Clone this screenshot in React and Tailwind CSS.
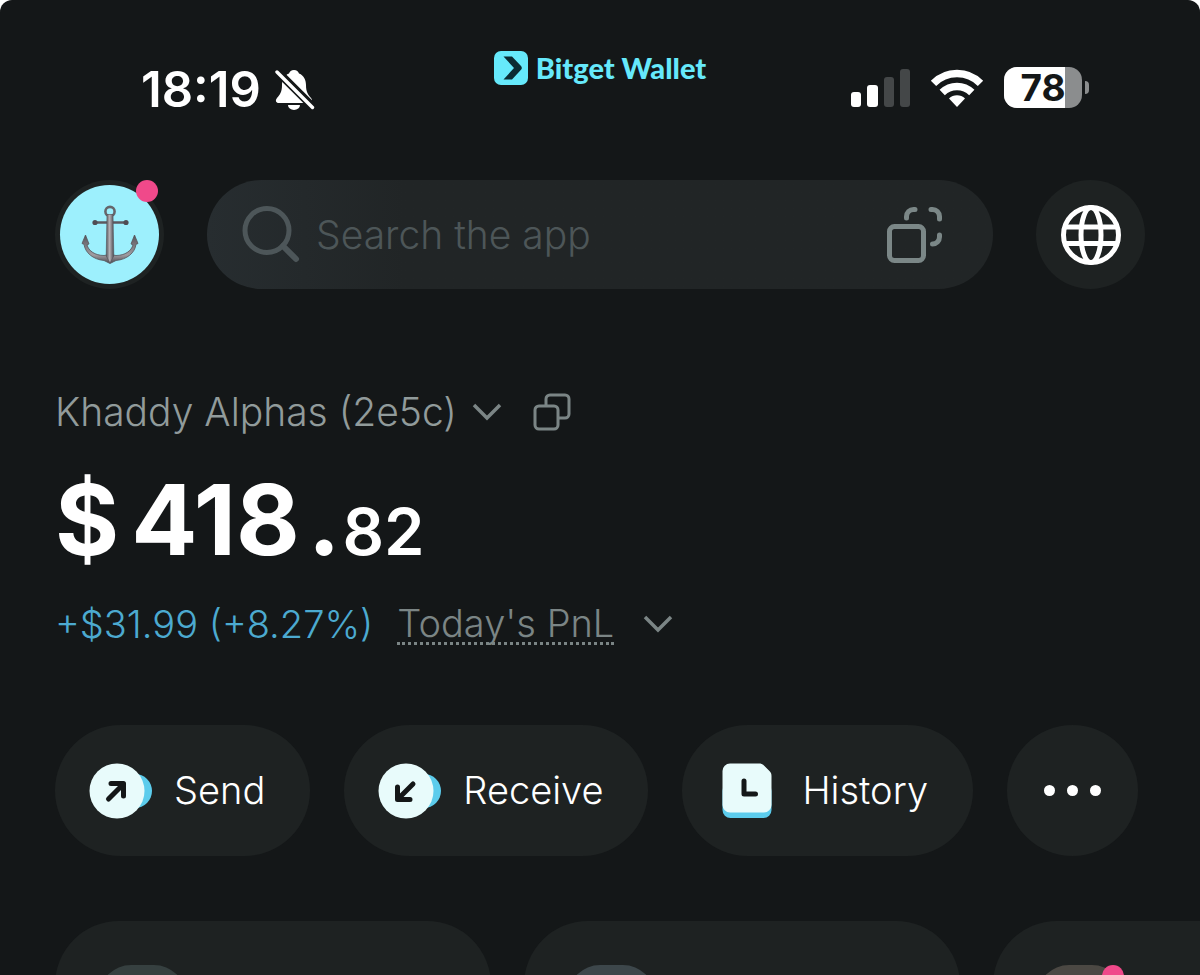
function BellOff() {
  return (
    <svg viewBox="0 0 40 42" className="h-[42px] w-10" aria-hidden="true">
      <path
        d="M19 1c-2.600 0-4.500 1.600-5 3.500C9 6.500 7 11 7 16c0 7-2 9.500-5 13-2 2.500-1.200 5 2 5h30c3.200 0 4-2.500 2-5-3-3.500-5-6-5-13 0-5-2-9.500-7-11.500C23.500 2.600 21.600 1 19 1z"
        fill="#fff"
      />
      <path d="M13 36h12a6 5 0 0 1-12 0z" fill="#fff" />
      <path d="M0 0L40 40" stroke="#141718" strokeWidth="8" />
      <path d="M2 3L37.500 38.500" stroke="#fff" strokeWidth="3.400" strokeLinecap="round" />
    </svg>
  )
}

function BrandMark() {
  return (
    <svg viewBox="0 0 34 34" className="h-[34px] w-[34px]" aria-hidden="true">
      <rect width="34" height="34" rx="7" fill="#66e9fb" />
      <path d="M9.500 5.500h8.500l9 9.500c1.100 1.200 1.100 2.600 0 3.800L18 28.500H9.500L20 17z" fill="#0b2b33" />
    </svg>
  )
}

function Signal() {
  return (
    <svg viewBox="0 0 60 38" className="h-[38px] w-[60px]" aria-hidden="true">
      <rect x="1" y="23" width="10" height="15" rx="3" fill="#fff" />
      <rect x="17" y="16" width="11" height="22" rx="3" fill="#fff" />
      <rect x="34" y="8" width="10" height="30" rx="3" fill="#444748" />
      <rect x="50" y="0" width="10" height="38" rx="3" fill="#444748" />
    </svg>
  )
}

function Wifi() {
  return (
    <svg viewBox="0 0 54 40" className="h-10 w-[54px]" aria-hidden="true">
      <g fill="none" stroke="#fff" strokeWidth="7.500">
        <path d="M3.500 15.300a33 33 0 0 1 47 0" />
        <path d="M12.200 24.500a21 21 0 0 1 29.600 0" />
      </g>
      <path d="M27 39l-8-8.500a11.500 11.500 0 0 1 16 0z" fill="#fff" />
    </svg>
  )
}

function Battery({ level }) {
  return (
    <div className="flex items-center gap-[3px]">
      <div className="relative flex h-[41px] w-[78px] items-center justify-center rounded-[13px] bg-[#8b8d8e]">
        <div className="absolute inset-y-0 left-0 rounded-l-[13px] bg-white" style={{ width: `${level}%` }} />
        <span className="relative text-[37px] leading-[41px] font-bold text-[#141718]">{level}</span>
      </div>
      <div className="h-[13px] w-1 rounded-r-full bg-[#8b8d8e]" />
    </div>
  )
}

function Anchor() {
  return (
    <svg viewBox="0 0 58 60" className="h-[60px] w-[58px]" aria-hidden="true">
      <defs>
        <linearGradient id="steel" x1="0" x2="1" y1="0" y2="0">
          <stop offset="0" stopColor="#55555b" />
          <stop offset="0.450" stopColor="#b5b2b6" />
          <stop offset="1" stopColor="#4b494f" />
        </linearGradient>
        <linearGradient id="arms" x1="0" x2="0" y1="0" y2="1">
          <stop offset="0" stopColor="#55535a" />
          <stop offset="0.700" stopColor="#a09da2" />
          <stop offset="1" stopColor="#4b494f" />
        </linearGradient>
      </defs>
      <circle cx="29" cy="6.500" r="4.600" fill="none" stroke="#66666b" strokeWidth="2.600" />
      <path d="M14 17.500h31" stroke="#5c5a60" strokeWidth="2.600" />
      <circle cx="14" cy="17.500" r="2.600" fill="#4f4d54" />
      <circle cx="45" cy="17.500" r="2.600" fill="#4f4d54" />
      <path
        d="M1 38.500L4.500 30l3.500 9-2 .8c1.500 6 8 10.700 17 10.700l6-1 6 1c9 0 15.500-4.700 17-10.700l-2-.8 3.500-9 3.500 8.500-2 .8c-1 8.500-9 15.200-20 16.200L29 58.500l-6-3C12 54.500 4 47.500 3 39.300z"
        fill="url(#arms)"
        stroke="#56545a"
        strokeWidth="0.800"
      />
      <path d="M26 9.500h6l.8 41.500-3.800 7-3.800-7z" fill="url(#steel)" stroke="#56545a" strokeWidth="0.600" />
    </svg>
  )
}

function SearchIcon() {
  return (
    <svg viewBox="0 0 58 58" className="h-[58px] w-[58px] shrink-0" aria-hidden="true">
      <g fill="none" stroke="#4d5659" strokeWidth="5" strokeLinecap="round">
        <circle cx="25" cy="24.500" r="22" />
        <path d="M41 40l13 13" strokeWidth="6" />
      </g>
    </svg>
  )
}

function ScanIcon() {
  return (
    <svg viewBox="0 0 56 56" className="h-14 w-14" aria-hidden="true">
      <g fill="none" stroke="#7b8787" strokeWidth="5" strokeLinecap="round">
        <rect x="2.500" y="19.500" width="34" height="34" rx="5" />
        <path d="M19.500 11v-1.500a7 7 0 0 1 7-7H28" />
        <path d="M44 2.500h1.500a7 7 0 0 1 7 7V12" />
        <path d="M52.500 28v2a7 7 0 0 1-7 7" />
      </g>
    </svg>
  )
}

function Globe() {
  return (
    <svg viewBox="0 0 60 60" className="h-[60px] w-[60px]" aria-hidden="true">
      <g fill="none" stroke="#fff" strokeWidth="5">
        <circle cx="30" cy="30" r="27.500" />
        <ellipse cx="30" cy="30" rx="10" ry="27.500" />
        <path d="M4 22h52M4 38.500h52" />
      </g>
    </svg>
  )
}

function Chevron() {
  return (
    <svg viewBox="0 0 32 20" className="h-5 w-8" aria-hidden="true">
      <path d="M3 3l13 13L29 3" fill="none" stroke="#7b8585" strokeWidth="3.500" />
    </svg>
  )
}

function CopyIcon() {
  return (
    <svg viewBox="0 0 38 38" className="h-[38px] w-[38px]" aria-hidden="true">
      <g fill="none" stroke="#7b8585" strokeWidth="3">
        <rect x="2" y="13" width="23" height="23" rx="4" />
        <path d="M13 13V6a4 4 0 0 1 4-4h15a4 4 0 0 1 4 4v15a4 4 0 0 1-4 4h-7" />
      </g>
    </svg>
  )
}

function TransferIcon({ incoming }) {
  return (
    <svg viewBox="0 0 64 56" className="h-14 w-16" aria-hidden="true">
      <circle cx="46" cy="28" r="17" fill="#5cccec" />
      <circle cx="28" cy="28" r="27.500" fill="#e8fbfb" />
      <path
        d={incoming ? 'M35 21L20.500 35.500M19.500 24v12.500H32' : 'M19.500 36L34 21.500M22 20.500h12.500V33'}
        fill="none"
        stroke="#141718"
        strokeWidth="5"
        strokeLinecap="round"
        strokeLinejoin="round"
      />
    </svg>
  )
}

function HistoryIcon() {
  return (
    <svg viewBox="0 0 50 56" className="h-14 w-[50px]" aria-hidden="true">
      <rect x="0.500" y="20" width="49" height="35" rx="8" fill="#5cccec" />
      <path d="M8 .5h29c2 0 3.500 .6 4.700 1.800l6 6c1.200 1.200 1.800 2.700 1.800 4.700v29a7.500 7.500 0 0 1-7.500 7.500H8A7.500 7.500 0 0 1 .5 42V8A7.500 7.500 0 0 1 8 .5z" fill="#e8fbfb" />
      <path d="M22 18v13h11.500" fill="none" stroke="#141718" strokeWidth="5" strokeLinecap="round" strokeLinejoin="round" />
    </svg>
  )
}

const actions = [
  { label: 'Send', icon: <TransferIcon /> },
  { label: 'Receive', icon: <TransferIcon incoming /> },
  { label: 'History', icon: <HistoryIcon />, wide: true },
]

const cards = [
  { id: 1, tile: 'bg-[#364040]' },
  { id: 2, tile: 'bg-[#3d474b]' },
  { id: 3, tile: 'bg-[#4b4843]', badge: true },
]

function StatusBar() {
  return (
    <div className="grid h-[180px] shrink-0 grid-cols-3 items-start px-[111px]">
      <div className="flex items-center gap-3.5 pt-[66px] pl-[30px]">
        <span className="text-[49px] leading-[48px] font-semibold">18:19</span>
        <BellOff />
      </div>
      <div className="flex items-center justify-center gap-2 pt-[51px]">
        <BrandMark />
        <span className="font-['Lato',sans-serif] text-[29px] leading-[34px] font-black text-[#66e9fb]">Bitget Wallet</span>
      </div>
      <div className="flex items-center justify-end gap-5 pt-[67px]">
        <Signal />
        <Wifi />
        <Battery level={78} />
      </div>
    </div>
  )
}

function Header() {
  return (
    <header className="flex h-[109px] items-center">
      <button aria-label="Profile" className="relative flex h-[109px] w-[109px] shrink-0 items-center justify-center rounded-full bg-[#1e2222]">
        <span className="flex h-[99px] w-[99px] items-center justify-center rounded-full bg-[#9df0fd]">
          <Anchor />
        </span>
        <span className="absolute top-0 right-1.5 h-[22px] w-[22px] rounded-full bg-[#f0498a]" />
      </button>
      <div className="ml-[43px] flex h-full min-w-0 flex-1 items-center rounded-full bg-linear-to-r from-[#272d30] to-[#212526] to-25% pr-[50px] pl-[35px]">
        <SearchIcon />
        <input
          type="search"
          aria-label="Search the app"
          placeholder="Search the app"
          className="ml-4 min-w-0 flex-1 bg-transparent text-[39px] leading-[48px] font-light outline-none placeholder:text-[#4d5658]"
        />
        <button aria-label="Scan"><ScanIcon /></button>
      </div>
      <button aria-label="Networks" className="ml-[43px] flex h-[109px] w-[109px] shrink-0 items-center justify-center rounded-full bg-[#1e2222]">
        <Globe />
      </button>
    </header>
  )
}

export default function App() {
  return (
    <div className="h-screen bg-white">
      <main className="flex h-full flex-col overflow-hidden rounded-t-xl bg-[#141718] font-['Inter',sans-serif] text-white">
        <StatusBar />
        <div className="px-[55px]">
          <Header />

          <section className="pt-[99px]">
            <div className="flex h-12 items-center">
              <button className="flex items-center gap-3.5 text-[39px] leading-[48px] font-light text-[#919b9b]">
                Khaddy Alphas (2e5c)
                <Chevron />
              </button>
              <button aria-label="Copy address" className="ml-[30px]"><CopyIcon /></button>
            </div>
            <p className="mt-7 flex items-baseline text-[98px] leading-[112px] font-bold">
              <span className="mr-3">$</span>
              <span>418</span>
              <span className="ml-2">.</span>
              <span className="ml-0.5 text-[65px] font-semibold">82</span>
            </p>
            <div className="mt-3 flex h-12 items-center text-[38px] leading-[48px] font-light">
              <span className="text-[#4caad0]">+$31.99 (+8.27%)</span>
              <button className="ml-6 flex items-center gap-7 text-[#7b8585]">
                <span className="border-b-3 border-dotted border-[#7b8585] leading-[38px]">Today's PnL</span>
                <Chevron />
              </button>
            </div>
          </section>

          <nav className="mt-[77px] flex gap-[34px]">
            {actions.map((a) => (
              <button
                key={a.label}
                className={`flex h-[131px] items-center rounded-full bg-[#1e2222] pr-[45px] text-[38px] font-light ${a.wide ? 'gap-[30px] pl-10' : 'gap-[21px] pl-[34px]'}`}
              >
                {a.icon}
                {a.label}
              </button>
            ))}
            <button aria-label="More" className="flex h-[131px] w-[131px] shrink-0 items-center justify-center gap-3 rounded-full bg-[#1e2222]">
              <span className="h-[11px] w-[11px] rounded-full bg-white" />
              <span className="h-[11px] w-[11px] rounded-full bg-white" />
              <span className="h-[11px] w-[11px] rounded-full bg-white" />
            </button>
          </nav>

          <div className="mt-[65px] flex gap-[33px]">
            {cards.map((c) => (
              <div key={c.id} className="h-[220px] w-[436px] shrink-0 rounded-[64px] bg-[#1e2222] px-[44px] pt-11">
                <div className={`relative h-[87px] w-[87px] rounded-[32px] ${c.tile}`}>
                  {c.badge && <span className="absolute top-0 right-0 h-[22px] w-[22px] rounded-full bg-[#f0498a]" />}
                </div>
              </div>
            ))}
          </div>
        </div>
      </main>
    </div>
  )
}
